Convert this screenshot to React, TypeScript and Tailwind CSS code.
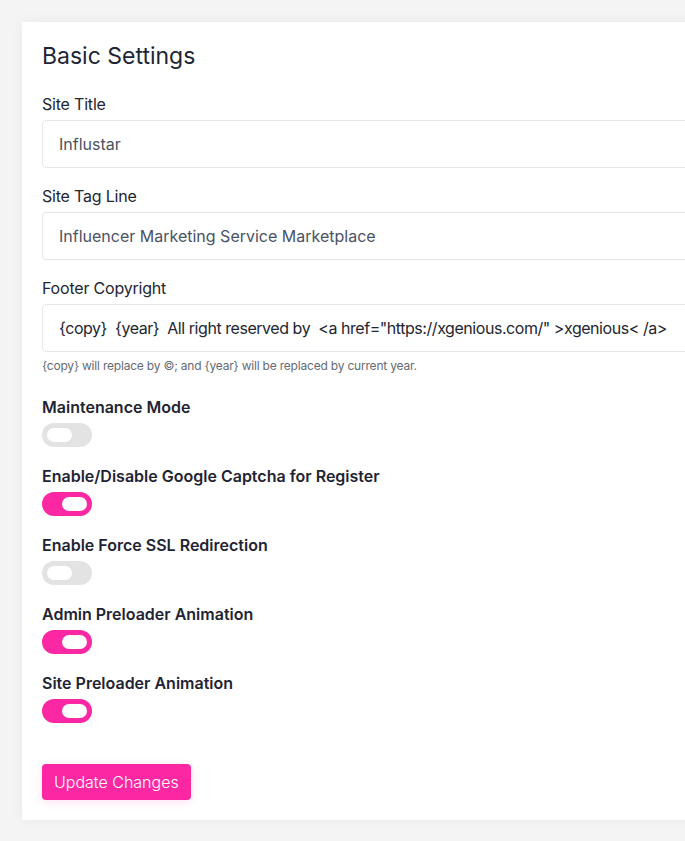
import { useState } from "react";

const font = { fontFamily: "Inter, 'Noto Sans', sans-serif" };

function Toggle({ on, onClick }: { on: boolean; onClick: () => void }) {
  return (
    <button
      type="button"
      onClick={onClick}
      className={`flex h-6 w-[50px] items-center rounded-full px-[5px] ${
        on ? "justify-end bg-[#fb27a3]" : "justify-start bg-[#e3e3e3]"
      }`}
    >
      <span className="h-[14px] w-[25px] rounded-full bg-white" />
    </button>
  );
}

export default function App() {
  const [toggles, setToggles] = useState([false, true, false, true, true]);

  const fields = [
    { label: "Site Title", value: "Influstar" },
    { label: "Site Tag Line", value: "Influencer Marketing Service Marketplace" },
  ];

  const switches = [
    "Maintenance Mode",
    "Enable/Disable Google Captcha for Register",
    "Enable Force SSL Redirection",
    "Admin Preloader Animation",
    "Site Preloader Animation",
  ];

  return (
    <div className="h-screen w-full overflow-hidden bg-[#f4f4f4] pl-[22px] pt-[22px]" style={font}>
      <div className="w-[720px] bg-white px-5 pb-5 pt-5 shadow-[0_0_12px_rgba(0,0,0,0.05)]">
        <h2 className="text-[23px] leading-7 text-[#1d2535]">Basic Settings</h2>

        <div className="mt-[22px] flex flex-col gap-4">
          {fields.map((f) => (
            <div key={f.label}>
              <label className="block text-base leading-6 tracking-[-0.2px] text-[#222631]">{f.label}</label>
              <div className="mt-1 flex h-12 items-center rounded border border-[#e6e6e6] px-4 text-base text-[#4a5263]">
                {f.value}
              </div>
            </div>
          ))}
          <div>
            <label className="block text-base leading-6 tracking-[-0.2px] text-[#222631]">Footer Copyright</label>
            <div className="mt-1 flex h-12 items-center whitespace-pre rounded border border-[#e6e6e6] px-4 text-base tracking-[-0.45px] text-[#222631]">
              {"{copy}  {year}  All right reserved by  <a href=\"https://xgenious.com/\" >xgenious< /a>"}
            </div>
            <p className="mt-1.5 text-[12px] leading-4 tracking-[-0.2px] text-[#666a73]">
              {"{copy} will replace by ©; and {year} will be replaced by current year."}
            </p>
          </div>
        </div>

        <div className="mt-[21px] flex flex-col gap-[17px]">
          {switches.map((s, i) => (
            <div key={s}>
              <div className="text-base font-semibold leading-6 text-[#1f2433]">{s}</div>
              <div className="mt-1">
                <Toggle
                  on={toggles[i]}
                  onClick={() => setToggles(toggles.map((t, j) => (j === i ? !t : t)))}
                />
              </div>
            </div>
          ))}
        </div>

        <button className="mt-[41px] h-9 rounded bg-[#fb27a3] px-3 text-base font-light text-white shadow-[0_2px_10px_rgba(251,39,163,0.15)]">
          Update Changes
        </button>
      </div>
    </div>
  );
}
